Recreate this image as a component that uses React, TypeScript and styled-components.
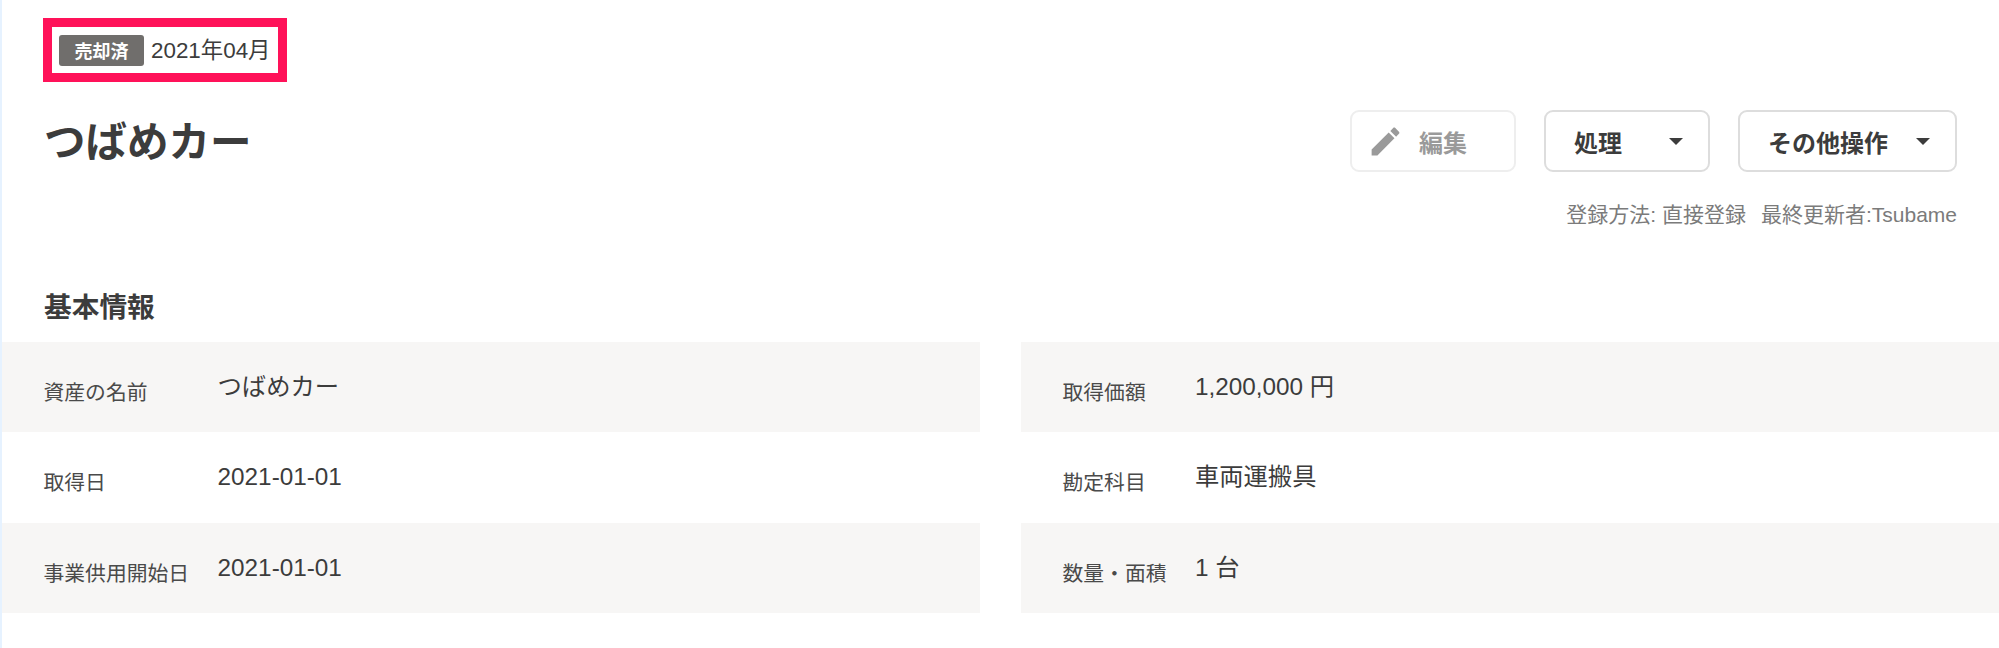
import { createGlobalStyle } from "styled-components";
import styled from "styled-components";

const GlobalStyle = createGlobalStyle`
  html, body {
    margin: 0;
    padding: 0;
    background: #fff;
  }
  body {
    font-family: "Liberation Sans", "Noto Sans CJK JP", sans-serif;
    color: #3c3c3c;
  }
`;

const Page = styled.div`
  width: 1999px;
  height: 648px;
  box-sizing: border-box;
  border-left: 2px solid #e6f2ff;
  padding-top: 18px;
  overflow: hidden;
`;

const Header = styled.header`
  display: flex;
  justify-content: space-between;
  padding: 0 42px 0 41px;
`;

const HeaderLeft = styled.div`
  display: flex;
  flex-direction: column;
  align-items: flex-start;
`;

const StatusBox = styled.div`
  display: flex;
  align-items: center;
  gap: 7px;
  width: 244px;
  height: 64px;
  box-sizing: border-box;
  padding-left: 7px;
  border: 9px solid #ff1259;
`;

const Badge = styled.span`
  display: flex;
  align-items: center;
  justify-content: center;
  width: 85px;
  height: 31px;
  background: #706e6c;
  border-radius: 3px;
  color: #fff;
  font-size: 18px;
  font-weight: 700;
`;

const StatusDate = styled.span`
  margin-bottom: 5px;
  font-size: 22.4px;
`;

const Title = styled.h1`
  margin: 31px 0 0 1px;
  font-size: 41.5px;
  font-weight: 700;
  line-height: 60px;
`;

const HeaderRight = styled.div`
  display: flex;
  flex-direction: column;
  align-items: flex-end;
  padding-top: 92px;
`;

const Actions = styled.div`
  display: flex;
  gap: 28px;
`;

const ActionButton = styled.button<{ $width: number; $muted?: boolean }>`
  display: flex;
  align-items: center;
  justify-content: space-between;
  width: ${({ $width }) => $width}px;
  height: 62px;
  box-sizing: border-box;
  padding: 0 25px 0 28px;
  background: #fff;
  border: 2px solid ${({ $muted }) => ($muted ? "#eeeeee" : "#dddddd")};
  border-radius: 9px;
  color: ${({ $muted }) => ($muted ? "#9a9a9a" : "#3c3c3c")};
  font-family: inherit;
  font-size: 24px;
  font-weight: 700;
`;

const EditButton = styled(ActionButton)`
  justify-content: flex-start;
  gap: 15px;
  padding-left: 15px;
`;

const Caret = styled.span`
  width: 0;
  height: 0;
  border-left: 7.5px solid transparent;
  border-right: 7.5px solid transparent;
  border-top: 7px solid #3c3c3c;
`;

const Meta = styled.div`
  display: flex;
  gap: 15px;
  margin-top: 29px;
  color: #7b7b7b;
  font-size: 21px;
  line-height: 28px;
`;

const SectionTitle = styled.h2`
  margin: 0;
  padding: 0 0 0 42px;
  position: absolute;
  top: 288px;
  font-size: 27.7px;
  font-weight: 700;
  line-height: 40px;
`;

const Columns = styled.div`
  position: absolute;
  top: 342px;
  left: 2px;
  right: 0;
  display: grid;
  grid-template-columns: 978px 1fr;
  gap: 41px;
`;

const InfoTable = styled.table`
  width: 100%;
  border-collapse: collapse;
`;

const InfoRow = styled.tr`
  height: 90.4px;

  &:nth-child(odd) {
    background: #f7f6f5;
  }
`;

const Label = styled.th`
  width: 1%;
  padding: 37px 28.5px 0 41.5px;
  box-sizing: border-box;
  vertical-align: top;
  white-space: nowrap;
  text-align: left;
  font-size: 20.8px;
  font-weight: 400;
  line-height: 28px;
  color: #4a4a4a;
`;

const Value = styled.td`
  padding: 31px 0 0;
  vertical-align: top;
  font-size: 24.3px;
  line-height: 28px;
`;

const leftRows = [
  ["資産の名前", "つばめカー"],
  ["取得日", "2021-01-01"],
  ["事業供用開始日", "2021-01-01"],
];

const rightRows = [
  ["取得価額", "1,200,000 円"],
  ["勘定科目", "車両運搬具"],
  ["数量・面積", "1 台"],
];

const EditIcon = () => (
  <svg width="37" height="37" viewBox="0 0 24 24" fill="#9a9a9a">
    <path d="M3 17.25V21h3.75L17.81 9.94l-3.75-3.75L3 17.25zM20.71 7.04c.39-.39.39-1.02 0-1.41l-2.34-2.34c-.39-.39-1.02-.39-1.41 0l-1.83 1.83 3.75 3.75 1.83-1.83z" />
  </svg>
);

const Table = ({ rows }: { rows: string[][] }) => (
  <InfoTable>
    <tbody>
      {rows.map(([label, value]) => (
        <InfoRow key={label}>
          <Label>{label}</Label>
          <Value>{value}</Value>
        </InfoRow>
      ))}
    </tbody>
  </InfoTable>
);

export default function App() {
  return (
    <Page>
      <GlobalStyle />
      <Header>
        <HeaderLeft>
          <StatusBox>
            <Badge>売却済</Badge>
            <StatusDate>2021年04月</StatusDate>
          </StatusBox>
          <Title>つばめカー</Title>
        </HeaderLeft>
        <HeaderRight>
          <Actions>
            <EditButton $width={166} $muted>
              <EditIcon />
              編集
            </EditButton>
            <ActionButton $width={166}>
              処理
              <Caret />
            </ActionButton>
            <ActionButton $width={219}>
              その他操作
              <Caret />
            </ActionButton>
          </Actions>
          <Meta>
            <span>登録方法: 直接登録</span>
            <span>最終更新者:Tsubame</span>
          </Meta>
        </HeaderRight>
      </Header>
      <SectionTitle>基本情報</SectionTitle>
      <Columns>
        <Table rows={leftRows} />
        <Table rows={rightRows} />
      </Columns>
    </Page>
  );
}
